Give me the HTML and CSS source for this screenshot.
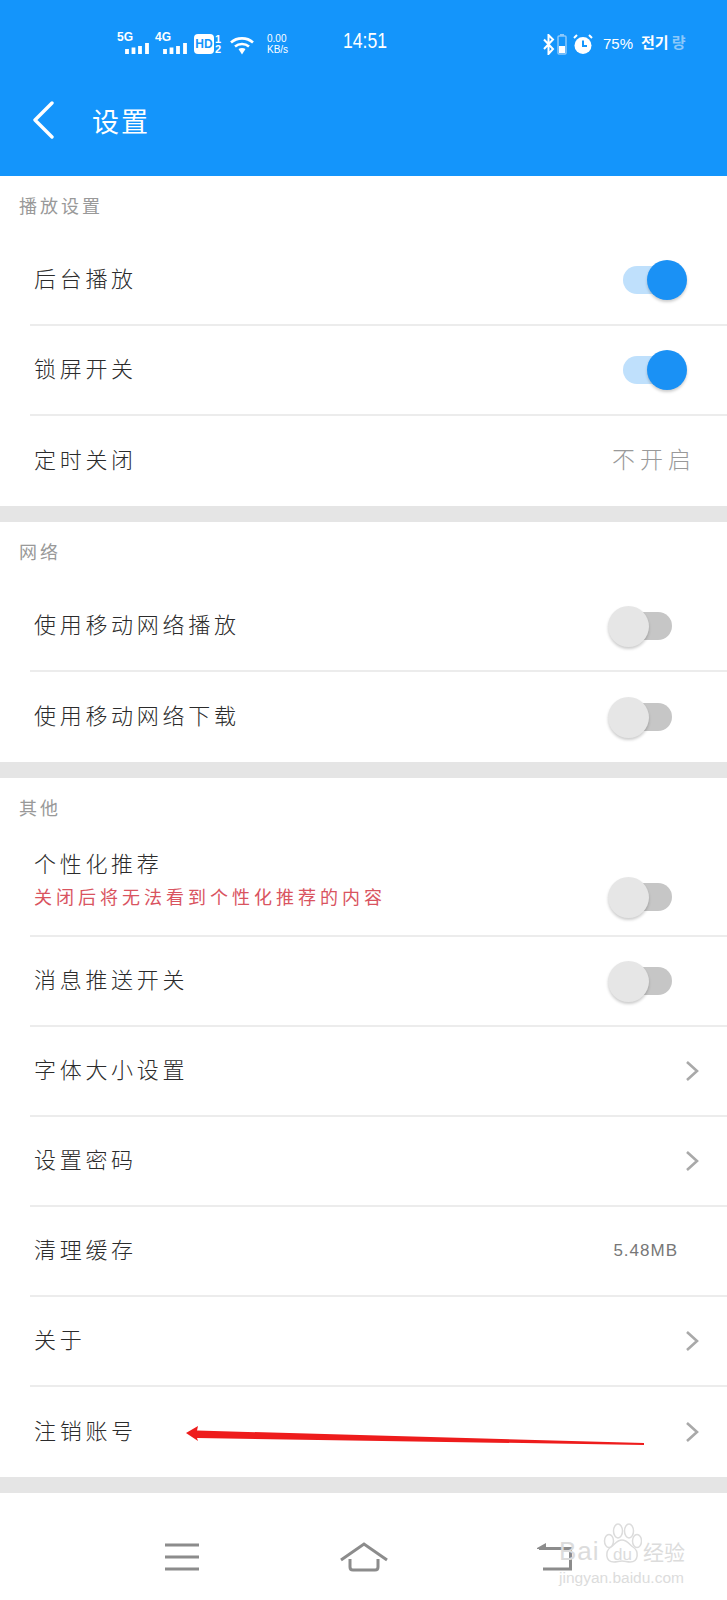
FILE: index.html
```html
<!DOCTYPE html>
<html lang="zh-CN">
<head>
    <meta charset="utf-8">
    <title>设置</title>
    <link rel="stylesheet" href="styles.css">
</head>
<body>

<div id="page">
    <!-- Blue header with the phone status bar -->
    <div class="header">
        <div class="status-bar">
            <div class="status-left">
                <div class="signal">
                    <span class="net-label">5G</span>
                    <svg width="24" height="11" viewBox="0 0 24 11"><path d="M2 11V6M8.500 11V4.500M15 11V3M22 11V0" stroke="#fff" stroke-width="3.800" fill="none"/></svg>
                </div>
                <div class="signal">
                    <span class="net-label">4G</span>
                    <svg width="24" height="11" viewBox="0 0 24 11"><path d="M2 11V6M8.500 11V4.500M15 11V3M22 11V0" stroke="#fff" stroke-width="3.800" fill="none"/></svg>
                </div>
                <span class="hd-box">HD</span>
                <div class="sim-nums"><span>1</span><span>2</span></div>
                <svg class="wifi" width="24" height="19" viewBox="0 0 24 19"><path d="M1 6.500C7 1 17 1 23 6.500M5 10.500c4-3.400 10-3.400 14 0" stroke="#fff" stroke-width="2.600" fill="none"/><path d="M8.500 13c2-1.500 5-1.500 7 0L12 18.500z" fill="#fff"/></svg>
                <div class="net-speed"><span>0.00</span><span>KB/s</span></div>
            </div>
            <div class="status-time">14:51</div>
            <div class="status-right">
                <svg width="12" height="21" viewBox="0 0 12 21"><path d="M1 5.500l9 9.500-4.500 5V1l4.500 4.500L1 15" stroke="#fff" stroke-width="2" fill="none"/></svg>
                <svg class="battery" width="10" height="21" viewBox="0 0 10 21"><rect x="1" y="2" width="8" height="18" rx="1" fill="none" stroke="#8cc8fa" stroke-width="1.500"/><rect x="3" y="0" width="4" height="2" fill="#8cc8fa"/><rect x="2" y="12" width="6" height="7" fill="#fff"/></svg>
                <svg class="alarm" width="20" height="21" viewBox="0 0 20 21"><circle cx="10" cy="11.500" r="8.500" fill="#fff"/><path d="M10 6.500v5.500h4" stroke="#1495fb" stroke-width="2" fill="none"/><path d="M1 4l3-3M19 4l-3-3" stroke="#fff" stroke-width="2"/></svg>
                <span class="battery-pct">75%</span>
                <span class="carrier">전기<span class="carrier-dim">량</span></span>
            </div>
        </div>
        <div class="title-bar">
            <svg class="back-icon" width="22" height="40" viewBox="0 0 22 40"><path d="M20 3L3 20l17 17" stroke="#fff" stroke-width="3.400" fill="none" stroke-linecap="round" stroke-linejoin="round"/></svg>
            <h1 class="page-title">设置</h1>
        </div>
    </div>

    <div class="section">
        <div class="section-label">播放设置</div>
        <div class="row">
            <span class="row-text">后台播放</span>
            <span class="switch switch-on"><span class="knob"></span></span>
        </div>
        <div class="row">
            <span class="row-text">锁屏开关</span>
            <span class="switch switch-on"><span class="knob"></span></span>
        </div>
        <div class="row row-last">
            <span class="row-text">定时关闭</span>
            <span class="row-value">不开启</span>
        </div>
    </div>

    <div class="section">
        <div class="section-label">网络</div>
        <div class="row">
            <span class="row-text">使用移动网络播放</span>
            <span class="switch"><span class="knob"></span></span>
        </div>
        <div class="row row-last">
            <span class="row-text">使用移动网络下载</span>
            <span class="switch"><span class="knob"></span></span>
        </div>
    </div>

    <div class="section">
        <div class="section-label">其他</div>
        <div class="row row-tall">
            <div class="row-stack">
                <span class="row-text">个性化推荐</span>
                <span class="row-note">关闭后将无法看到个性化推荐的内容</span>
            </div>
            <span class="switch switch-low"><span class="knob"></span></span>
        </div>
        <div class="row">
            <span class="row-text">消息推送开关</span>
            <span class="switch"><span class="knob"></span></span>
        </div>
        <div class="row">
            <span class="row-text">字体大小设置</span>
            <svg class="chevron" width="14" height="22" viewBox="0 0 14 22"><path d="M2 2l10 9-10 9" stroke="#a9a9a9" stroke-width="2.600" fill="none"/></svg>
        </div>
        <div class="row">
            <span class="row-text">设置密码</span>
            <svg class="chevron" width="14" height="22" viewBox="0 0 14 22"><path d="M2 2l10 9-10 9" stroke="#a9a9a9" stroke-width="2.600" fill="none"/></svg>
        </div>
        <div class="row">
            <span class="row-text">清理缓存</span>
            <span class="row-size">5.48MB</span>
        </div>
        <div class="row">
            <span class="row-text">关于</span>
            <svg class="chevron" width="14" height="22" viewBox="0 0 14 22"><path d="M2 2l10 9-10 9" stroke="#a9a9a9" stroke-width="2.600" fill="none"/></svg>
        </div>
        <div class="row row-last">
            <span class="row-text">注销账号</span>
            <svg class="chevron" width="14" height="22" viewBox="0 0 14 22"><path d="M2 2l10 9-10 9" stroke="#a9a9a9" stroke-width="2.600" fill="none"/></svg>
        </div>
    </div>

    <!-- Bottom phone navigation -->
    <div class="bottom-nav">
        <svg class="nav-menu" width="34" height="28" viewBox="0 0 34 28"><path d="M0 2h34M0 14h34M0 26h34" stroke="#8c8c8c" stroke-width="3" fill="none"/></svg>
        <svg class="nav-home" width="48" height="30" viewBox="0 0 48 30"><path d="M1 18L24 2l23 16" stroke="#8c8c8c" stroke-width="3" fill="none"/><path d="M10 17v8q0 3 3 3h22q3 0 3-3v-8" stroke="#8c8c8c" stroke-width="3" fill="none"/></svg>
        <svg class="nav-back" width="36" height="30" viewBox="0 0 36 30"><path d="M2 6.500h31.500V27H6" stroke="#8c8c8c" stroke-width="3" fill="none"/><path d="M0 6l9-5v6H0z" fill="#8c8c8c"/></svg>
    </div>

    <!-- Red arrow drawn over the screenshot -->
    <svg class="arrow" width="727" height="40" viewBox="0 0 727 40"><path d="M186 13L198 6l-1 4.500L644 23v2L197 18l1 3z" fill="#ee1c1c"/></svg>

    <!-- Watermark -->
    <div class="watermark">
        <svg class="wm-paw" width="40" height="40" viewBox="0 0 40 40"><g fill="none" stroke="#dcdcdc" stroke-width="1.500"><ellipse cx="7" cy="18" rx="4.500" ry="6.500"/><ellipse cx="16" cy="8" rx="4.500" ry="7"/><ellipse cx="27" cy="8" rx="4.500" ry="7"/><ellipse cx="35" cy="18" rx="4.500" ry="6.500"/><path d="M20 17c5 0 7 4 11 7 6 4 6 15-3 15-3 0-5-1-8-1s-5 1-8 1c-9 0-9-11-3-15 4-3 6-7 11-7z"/></g></svg>
        <div class="wm-top"><span class="wm-bai">Bai</span><span class="wm-du">du</span><span class="wm-cn">经验</span></div>
        <div class="wm-url">jingyan.baidu.com</div>
    </div>
</div>

</body>
</html>
```
FILE: styles.css
```css
body {
    margin: 0;
    padding: 0;
    background-color: white;
    font-family: "Noto Sans CJK SC", "Noto Sans", sans-serif;
}

#page {
    position: relative;
    width: 727px;
    height: 1600px;
    overflow: hidden;
    background-color: #e5e5e5;
}

/* header */
.header {
    height: 176px;
    background-color: #1495fb;
    color: white;
}

.status-bar {
    display: flex;
    align-items: flex-start;
    height: 32px;
    padding: 32px 0 0 117px;
}

.status-left {
    display: flex;
    align-items: flex-start;
    width: 226px;
    height: 24px;
}

.signal {
    display: flex;
    flex-direction: column;
    width: 38px;
    height: 22px;
}

.signal svg {
    margin: 0 0 0 8px;
}

.net-label {
    font-family: "Liberation Sans", sans-serif;
    font-size: 12px;
    font-weight: 700;
    line-height: 11px;
}

.hd-box {
    width: 20px;
    height: 20px;
    margin: 2px 0 0 1px;
    background-color: white;
    border-radius: 4px;
    color: #1495fb;
    font-family: "Liberation Sans", sans-serif;
    font-size: 12px;
    font-weight: 700;
    line-height: 20px;
    text-align: center;
}

.sim-nums {
    display: flex;
    flex-direction: column;
    width: 8px;
    margin-top: 2px;
    font-family: "Liberation Sans", sans-serif;
    font-size: 11px;
    font-weight: 700;
    line-height: 10px;
    text-align: center;
}

.wifi {
    margin: 4px 0 0 8px;
}

.net-speed {
    display: flex;
    flex-direction: column;
    gap: 1px;
    margin: 2px 0 0 13px;
    font-family: "Liberation Sans", sans-serif;
    font-size: 10px;
    line-height: 10px;
}

.status-time {
    width: 200px;
    margin-top: -2px;
    font-family: "Liberation Sans", sans-serif;
    font-size: 22px;
    line-height: 22px;
    transform: scaleX(0.8);
    transform-origin: left;
}

.status-right {
    display: flex;
    align-items: flex-start;
    height: 24px;
    margin-top: 2px;
}

.battery {
    margin-left: 2px;
}

.alarm {
    margin-left: 6px;
}

.battery-pct {
    margin-left: 10px;
    font-family: "Liberation Sans", sans-serif;
    font-size: 15px;
    line-height: 20px;
}

.carrier {
    margin: -2px 0 0 8px;
    font-family: "Noto Sans CJK KR", sans-serif;
    font-size: 15px;
    font-weight: 700;
    line-height: 20px;
}

.carrier-dim {
    margin-left: 3px;
    color: #8cc8fa;
}

.title-bar {
    display: flex;
    align-items: center;
    height: 112px;
    padding-left: 32px;
}

.page-title {
    margin: 0 0 0 38px;
    font-size: 27px;
    font-weight: 400;
    letter-spacing: 2px;
}

/* settings sections */
.section {
    margin-bottom: 16px;
    background-color: white;
}

.section-label {
    height: 60px;
    padding-left: 19px;
    color: #999;
    font-size: 18px;
    letter-spacing: 3px;
    line-height: 58px;
}

.row {
    display: flex;
    align-items: center;
    justify-content: space-between;
    box-sizing: border-box;
    height: 90px;
    margin-left: 30px;
    padding: 0 28px 0 4px;
    border-bottom: 2px solid #ececec;
}

.row-last {
    border-bottom: none;
}

.section:last-of-type .row-last {
    height: 91px;
}

.row-tall {
    height: 99px;
}

.row-stack {
    display: flex;
    flex-direction: column;
    padding-bottom: 17px;
}

.row-text {
    margin-bottom: 6px;
    color: #2b2b2b;
    font-size: 22px;
    font-weight: 300;
    letter-spacing: 3.700px;
    line-height: 30px;
}

.row-stack .row-text {
    margin-bottom: 6px;
}

.row-note {
    color: #d9545f;
    font-size: 18px;
    letter-spacing: 4px;
    line-height: 26px;
}

.row-value {
    margin: 0 3px 6px 0;
    color: #999;
    font-size: 23px;
    font-weight: 300;
    letter-spacing: 5px;
}

.row-size {
    margin-right: 21px;
    color: #777;
    font-family: "Liberation Sans", sans-serif;
    font-size: 17px;
    letter-spacing: 1px;
}

/* switches */
.switch {
    position: relative;
    width: 51px;
    height: 28px;
    margin-right: 27px;
    border-radius: 0 14px 14px 0;
    background-color: #c6c6c6;
}

.switch .knob {
    position: absolute;
    top: -6px;
    left: -13px;
    width: 41px;
    height: 41px;
    border-radius: 50%;
    background-color: #e6e6e6;
    box-shadow: 0 2px 3px rgba(0, 0, 0, 0.2);
}

.switch-low {
    top: 10px;
}

.switch-on {
    width: 52px;
    margin-right: 24px;
    border-radius: 14px;
    background-color: #bfe0fc;
}

.switch-on .knob {
    top: -6px;
    left: 24px;
    width: 40px;
    height: 40px;
    background-color: #1a91f5;
}

/* bottom nav */
.bottom-nav {
    display: flex;
    align-items: center;
    box-sizing: border-box;
    height: 107px;
    padding: 21px 0 0 165px;
    background-color: white;
}

.nav-home {
    margin-left: 141px;
}

.nav-back {
    margin-left: 149px;
}

/* overlays */
.arrow {
    position: absolute;
    top: 1420px;
    left: 0;
}

.watermark {
    position: absolute;
    top: 1523px;
    left: 559px;
    width: 132px;
    height: 66px;
    color: #dcdcdc;
}

.wm-paw {
    position: absolute;
    top: 0;
    left: 43px;
}

.wm-top {
    display: flex;
    align-items: baseline;
    box-sizing: border-box;
    height: 46px;
    padding-top: 12px;
    font-family: "Liberation Sans", sans-serif;
    line-height: 32px;
}

.wm-bai {
    width: 54px;
    font-size: 26px;
    letter-spacing: 1px;
}

.wm-du {
    width: 30px;
    font-size: 17px;
}

.wm-cn {
    font-family: "Noto Sans CJK SC", sans-serif;
    font-size: 21px;
    line-height: 32px;
}

.wm-url {
    margin-top: 1px;
    font-family: "Liberation Sans", sans-serif;
    font-size: 15.500px;
    line-height: 16px;
}
```
